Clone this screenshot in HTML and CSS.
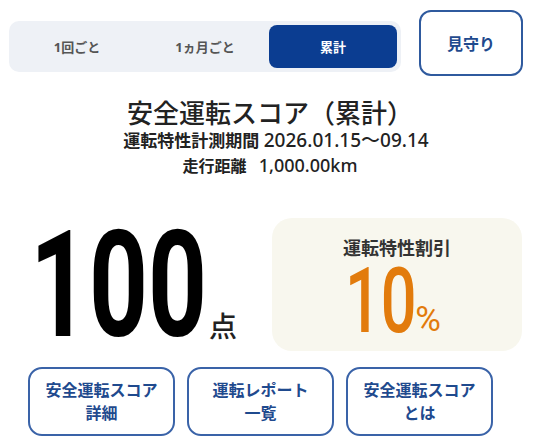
FILE: index.html
```html
<!DOCTYPE html>
<html lang="ja">
<head>
    <meta charset="UTF-8">
    <meta name="viewport" content="width=device-width, initial-scale=1.0">
    <title>安全運転スコア</title>
    <link rel="stylesheet" href="styles.css">
</head>
<body>
    <div class="score-page">
        <div class="top-row">
            <div class="period-tabs">
                <button class="tab">1回ごと</button>
                <button class="tab">1ヵ月ごと</button>
                <button class="tab active">累計</button>
            </div>
            <button class="watch-btn">見守り</button>
        </div>

        <div class="summary">
            <h1>安全運転スコア（累計）</h1>
            <p class="period">運転特性計測期間 <span class="num">2026.01.15～09.14</span></p>
            <p class="distance">走行距離 <span class="num">1,000.00km</span></p>
        </div>

        <div class="score-row">
            <div class="score">
                <span class="score-num">100</span>
                <span class="score-unit">点</span>
            </div>
            <div class="discount-card">
                <div class="discount-label">運転特性割引</div>
                <div class="discount-value">
                    <span class="discount-num">10</span>
                    <span class="discount-unit">%</span>
                </div>
            </div>
        </div>

        <div class="link-buttons">
            <button class="link-btn">安全運転スコア<br>詳細</button>
            <button class="link-btn">運転レポート<br>一覧</button>
            <button class="link-btn">安全運転スコア<br>とは</button>
        </div>
    </div>
</body>
</html>
```

FILE: styles.css
```css
body {
    margin: 0;
    background-color: #fff;
    font-family: "Noto Sans", "Noto Sans CJK JP", sans-serif;
    color: #222;
}

button {
    font-family: inherit;
    cursor: pointer;
}

.score-page {
    width: 522px;
    padding: 10px 0 0 9px;
}

.top-row {
    display: flex;
    align-items: flex-start;
    gap: 18px;
}

.period-tabs {
    display: flex;
    margin-top: 11px;
    width: 384px;
    padding: 4px;
    background-color: #eef1f6;
    border-radius: 10px;
}

.tab {
    flex: 1;
    height: 43px;
    border: none;
    background: none;
    border-radius: 8px;
    font-size: 13px;
    font-weight: bold;
    color: #555;
}

.tab.active {
    background-color: #0b3d91;
    color: #fff;
}

.watch-btn {
    width: 104px;
    height: 66px;
    background-color: #fff;
    border: 2px solid #2f5a9e;
    border-radius: 12px;
    font-size: 16px;
    font-weight: bold;
    color: #1f4a8e;
}

.summary {
    text-align: center;
    margin-top: 23px;
}

.summary h1 {
    margin: 0;
    font-size: 26px;
    font-weight: 500;
    line-height: 28px;
    color: #222;
}

.summary p {
    margin: 0;
    font-weight: bold;
}

.period {
    font-size: 17px;
    line-height: 22px;
    padding-left: 12px;
    margin-top: 2px !important;
}

.period .num {
    font-size: 19px;
    font-weight: 500;
}

.distance {
    font-size: 16px;
    line-height: 24px;
    margin-top: 1px !important;
}

.distance .num {
    font-size: 18px;
    font-weight: 500;
    margin-left: 8px;
}

.score-row {
    display: flex;
    align-items: center;
    margin-top: 40px;
}

.score {
    display: flex;
    align-items: flex-end;
    width: 263px;
    padding-left: 21px;
    box-sizing: border-box;
}

.score-num {
    display: inline-block;
    width: 179px;
    font-family: Roboto, sans-serif;
    font-size: 149px;
    font-weight: bold;
    line-height: 120px;
    color: #000;
    white-space: nowrap;
    transform: scaleX(0.69);
    transform-origin: left;
}

.score-unit {
    font-size: 28px;
    font-weight: 500;
    line-height: 30px;
    margin-bottom: 4px;
}

.discount-card {
    width: 250px;
    height: 133px;
    background-color: #f8f7ee;
    border-radius: 20px;
    text-align: center;
    box-sizing: border-box;
    padding-top: 19px;
}

.discount-label {
    font-size: 18px;
    font-weight: bold;
    line-height: 22px;
    color: #333;
}

.discount-value {
    display: flex;
    justify-content: center;
    align-items: flex-end;
    color: #e27b0c;
    margin-top: 10px;
    padding-right: 8px;
}

.discount-num {
    display: inline-block;
    width: 70px;
    font-family: Roboto, sans-serif;
    font-size: 90px;
    font-weight: 500;
    line-height: 66px;
    white-space: nowrap;
    text-align: left;
    transform: scaleX(0.7);
    transform-origin: left;
}

.discount-unit {
    font-family: Roboto, sans-serif;
    font-size: 35px;
    line-height: 30px;
}

.link-buttons {
    display: flex;
    gap: 12px;
    margin-top: 16px;
    padding-left: 19px;
}

.link-btn {
    width: 147px;
    height: 69px;
    background-color: #fff;
    border: 2px solid #3a63a8;
    border-radius: 14px;
    font-size: 16px;
    font-weight: bold;
    line-height: 23px;
    color: #1f4a8e;
}
```
